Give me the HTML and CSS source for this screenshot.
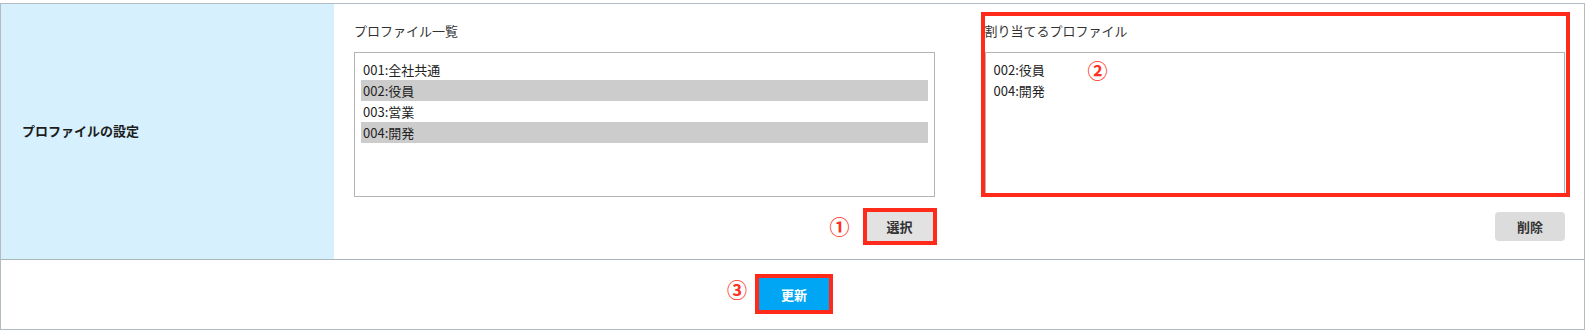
FILE: index.html
```html
<!DOCTYPE html>
<html lang="ja">
<head>
<meta charset="utf-8">
<title>プロファイルの設定</title>
<link rel="stylesheet" href="styles.css">
</head>
<body>
<div class="table">
  <div class="row main">
    <div class="label">プロファイルの設定</div>
    <div class="content">
      <div class="col">
        <div class="col-title">プロファイル一覧</div>
        <div class="listbox">
          <div class="item">001:全社共通</div>
          <div class="item sel">002:役員</div>
          <div class="item">003:営業</div>
          <div class="item sel">004:開発</div>
        </div>
        <div class="actions">
          <span class="mark">①</span>
          <button class="btn gray">選択<span class="hl"></span></button>
        </div>
      </div>
      <div class="col">
        <div class="assigned">
          <div class="col-title">割り当てるプロファイル</div>
          <div class="listbox">
            <div class="item">002:役員</div>
            <div class="item">004:開発</div>
            <span class="mark mark-in">②</span>
          </div>
          <span class="hl-box"></span>
        </div>
        <div class="actions">
          <button class="btn gray rounded">削除</button>
        </div>
      </div>
    </div>
  </div>
  <div class="row foot">
    <span class="mark foot-mark">③</span>
    <button class="btn primary">更新<span class="hl"></span></button>
    <span class="foot-spacer"></span>
  </div>
</div>
</body>
</html>
```

FILE: styles.css
```css
* { box-sizing: border-box; }

html, body {
  margin: 0;
  padding: 0;
  background: #ffffff;
}

body {
  padding-top: 3px;
  font-family: "Noto Sans CJK JP", "Noto Sans", sans-serif;
  font-size: 13px;
  color: #222;
}

.table {
  width: 1585px;
  border: 1px solid #b3bcc2;
}

.row.main {
  display: flex;
  height: 256px;
  border-bottom: 1px solid #a9b4bb;
}

.label {
  width: 333px;
  flex: none;
  background: #d6f1fd;
  display: flex;
  align-items: center;
  padding-left: 21px;
  padding-bottom: 2px;
  font-weight: bold;
  font-size: 13px;
  color: #1c1c1c;
}

.content {
  flex: 1;
  display: flex;
  gap: 50px;
  padding: 18px 19px 18px 20px;
}

.col {
  flex: 1;
  min-width: 0;
  display: flex;
  flex-direction: column;
}

.col-title {
  height: 18px;
  line-height: 18px;
  font-size: 13px;
  color: #333;
  margin-bottom: 12px;
}

.assigned {
  position: relative;
}

.listbox {
  position: relative;
  height: 145px;
  border: 1px solid #b4b4b4;
  padding: 6px;
  background: #fff;
}

.item {
  height: 21px;
  line-height: 21px;
  padding-left: 2px;
  font-size: 13px;
  color: #222;
}

.item.sel {
  background: #cccccc;
}

.actions {
  margin-top: 15px;
  display: flex;
  justify-content: flex-end;
  align-items: center;
  gap: 15px;
}

.btn {
  position: relative;
  width: 70px;
  height: 29px;
  padding: 0;
  border: none;
  font-family: "Noto Sans CJK JP", "Noto Sans", sans-serif;
  font-size: 13px;
  font-weight: bold;
  color: #333;
  cursor: pointer;
}

.btn.gray {
  background: #e2e2e2;
}

.btn.rounded {
  background: #dcdcdc;
  border-radius: 4px;
}

.btn.primary {
  width: 70px;
  height: 32px;
  background: #00a6f4;
  color: #ffffff;
}

.row.foot {
  height: 69px;
  display: grid;
  grid-template-columns: 1fr auto 1fr;
  align-items: center;
  padding-left: 3px;
  padding-bottom: 1px;
}

.foot-mark {
  justify-self: end;
  margin-right: 12px;
  margin-top: -8px;
}

.mark {
  font-size: 20px;
  line-height: 20px;
  font-weight: bold;
  color: #ff2f22;
  text-shadow: 0 0 1px #fff, 0 0 2px #fff;
}

.mark-in {
  position: absolute;
  left: 102px;
  top: 8px;
}

.hl {
  position: absolute;
  left: -2px;
  right: -2px;
  top: -4px;
  bottom: -4px;
  border: 4px solid #ff2a1a;
  pointer-events: none;
}

.btn.primary .hl {
  left: -4px;
  right: -4px;
}

.hl-box {
  position: absolute;
  left: -4px;
  right: -5px;
  top: -10px;
  bottom: 0;
  border: 4px solid #ff2a1a;
  pointer-events: none;
}
```
